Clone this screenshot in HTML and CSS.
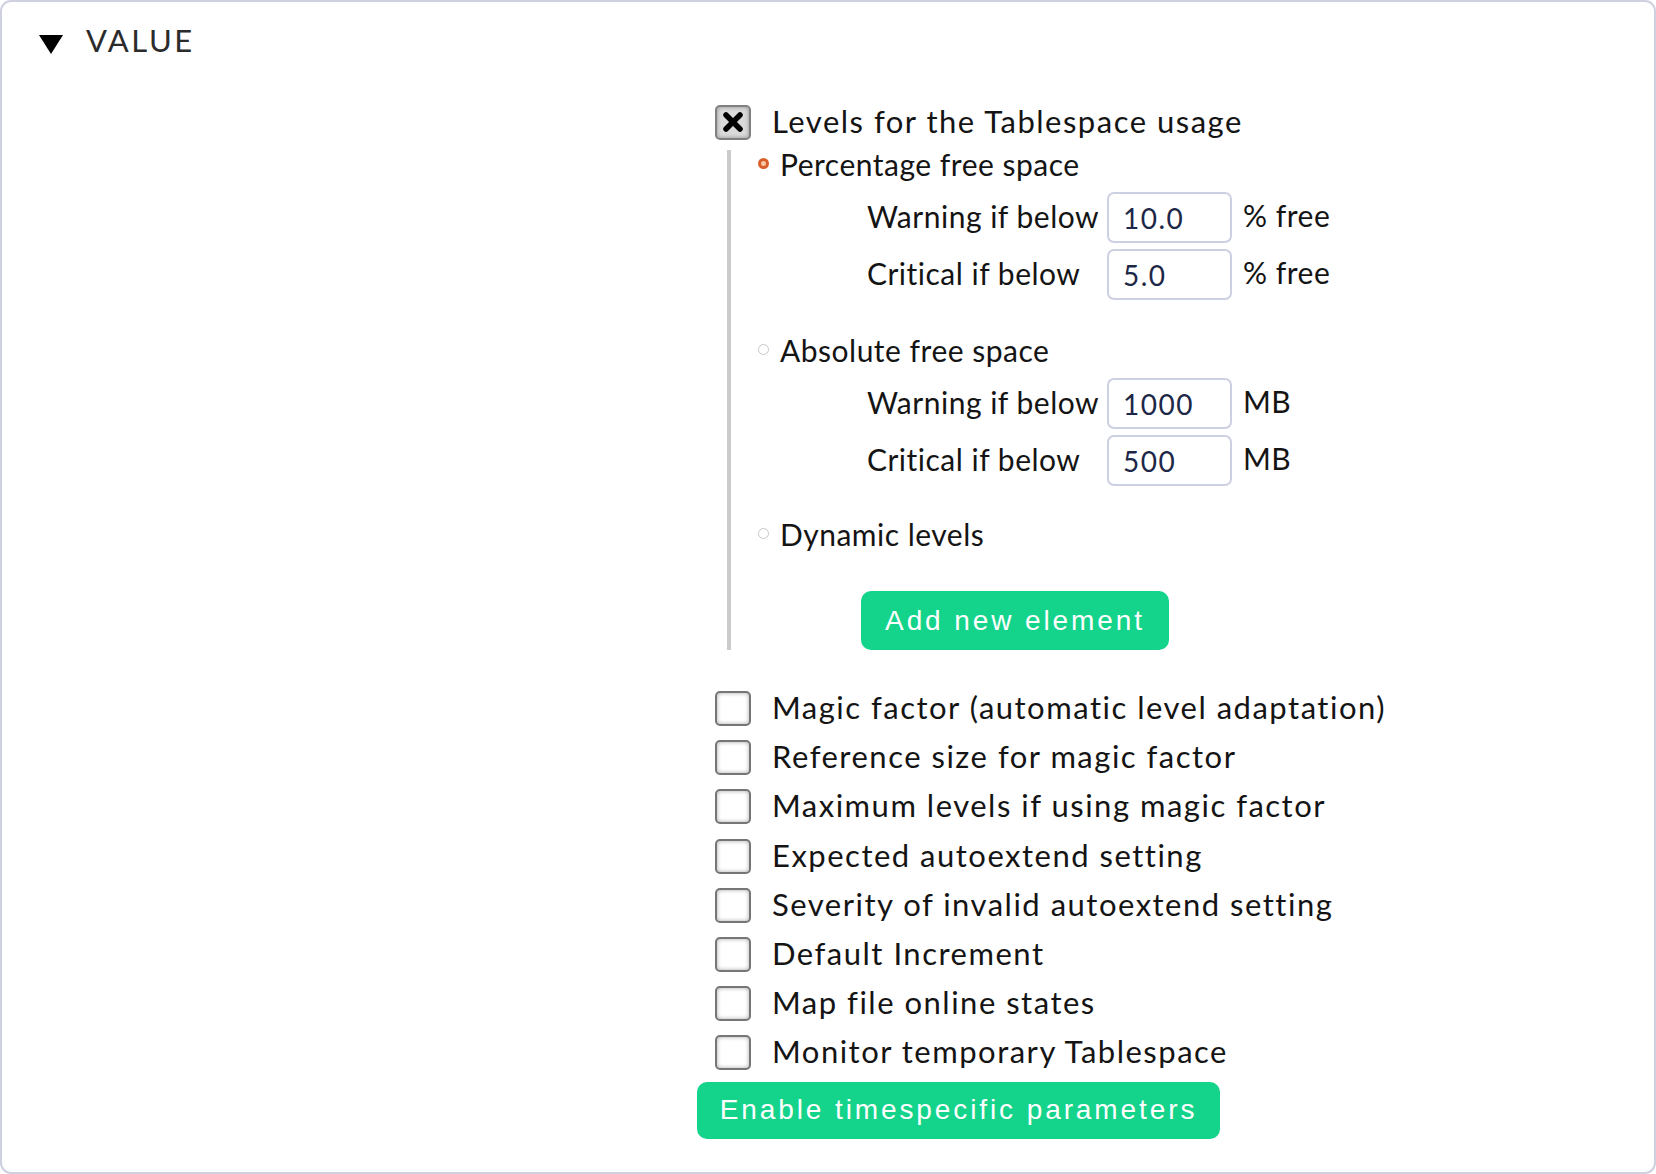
FILE: index.html
```html
<!DOCTYPE html>
<html>
<head>
<meta charset="utf-8">
<link rel="stylesheet" href="styles.css">
</head>
<body>
<div class="panel">
  <div class="head">
    <span class="tri"></span>
    <span class="title">VALUE</span>
  </div>
  <div class="form">
    <div class="cbrow main">
      <span class="cb checked"><svg width="22" height="20" viewBox="0 0 22 20"><path d="M4 3 L18 17 M18 3 L4 17" stroke="#000" stroke-width="5.5" stroke-linecap="round" fill="none"/></svg></span>
      <span class="lbl">Levels for the Tablespace usage</span>
    </div>
    <div class="nest">
      <div class="rrow"><span class="radio on"></span><span class="lbl">Percentage free space</span></div>
      <div class="fields">
        <span class="flabel">Warning if below</span><input class="inp" type="text" value="10.0"><span class="unit">% free</span>
        <span class="flabel">Critical if below</span><input class="inp" type="text" value="5.0"><span class="unit">% free</span>
      </div>
      <div class="rrow"><span class="radio"></span><span class="lbl">Absolute free space</span></div>
      <div class="fields">
        <span class="flabel">Warning if below</span><input class="inp" type="text" value="1000"><span class="unit">MB</span>
        <span class="flabel">Critical if below</span><input class="inp" type="text" value="500"><span class="unit">MB</span>
      </div>
      <div class="rrow"><span class="radio"></span><span class="lbl">Dynamic levels</span></div>
      <div class="btnwrap"><button class="btn add">Add new element</button></div>
    </div>
    <div class="cblist">
      <div class="cbrow"><span class="cb"></span><span class="lbl">Magic factor (automatic level adaptation)</span></div>
      <div class="cbrow"><span class="cb"></span><span class="lbl">Reference size for magic factor</span></div>
      <div class="cbrow"><span class="cb"></span><span class="lbl">Maximum levels if using magic factor</span></div>
      <div class="cbrow"><span class="cb"></span><span class="lbl">Expected autoextend setting</span></div>
      <div class="cbrow"><span class="cb"></span><span class="lbl">Severity of invalid autoextend setting</span></div>
      <div class="cbrow"><span class="cb"></span><span class="lbl">Default Increment</span></div>
      <div class="cbrow"><span class="cb"></span><span class="lbl">Map file online states</span></div>
      <div class="cbrow"><span class="cb"></span><span class="lbl">Monitor temporary Tablespace</span></div>
    </div>
    <div class="enwrap"><button class="btn enable">Enable timespecific parameters</button></div>
  </div>
</div>
</body>
</html>
```
FILE: styles.css
```css
html, body {
  margin: 0;
  padding: 0;
  background: #ffffff;
}
body {
  font-family: Lato, "Open Sans", sans-serif;
  color: #141414;
}
.panel {
  box-sizing: border-box;
  width: 1656px;
  height: 1174px;
  border: 2px solid #cfd0e0;
  border-radius: 11px;
  background: #fff;
}
.head {
  display: flex;
  align-items: center;
  height: 76px;
  padding-left: 37px;
}
.tri {
  width: 0;
  height: 0;
  border-left: 12px solid transparent;
  border-right: 12px solid transparent;
  border-top: 19px solid #000;
  margin-top: 8px;
}
.title {
  margin-left: 23px;
  font-size: 31px;
  letter-spacing: 2.5px;
  color: #2b2b2b;
}
.form {
  padding-left: 713px;
  padding-top: 26px;
  font-size: 31px;
  letter-spacing: 1.5px;
}
.lbl {
  white-space: nowrap;
}
.cbrow {
  display: flex;
  align-items: center;
  height: 49.2px;
}
.cbrow .lbl {
  margin-top: -3px;
}
.cbrow.main {
  height: 36px;
}
.cb {
  box-sizing: border-box;
  width: 36px;
  height: 35px;
  flex: none;
  border: 2px solid #767676;
  border-radius: 5px;
  background: #fff;
  box-shadow: inset 0 0 4px rgba(0,0,0,0.35);
  margin-right: 21px;
  display: flex;
  align-items: center;
  justify-content: center;
}
.cb.checked {
  background: #dadada;
  border-color: #808080;
}
.nest {
  margin-left: 12px;
  margin-top: 10px;
  border-left: 4px solid #cbcbcb;
  padding-left: 27px;
  width: 700px;
  font-size: 30px;
  letter-spacing: 0.5px;
}
.rrow {
  display: flex;
  align-items: center;
  height: 30px;
}
.rrow .lbl {
  margin-top: -2px;
}
.radio {
  box-sizing: border-box;
  width: 11px;
  height: 11px;
  border-radius: 50%;
  border: 1.5px solid #c8c8c8;
  background: #fff;
  margin-right: 11px;
  margin-top: -4px;
  flex: none;
}
.radio.on {
  border: 3px solid #d9602a;
  background: #f5c8a8;
}
.fields {
  display: grid;
  grid-template-columns: 240px 125px auto;
  grid-auto-rows: 51px;
  row-gap: 6px;
  align-items: center;
  margin-left: 109px;
  margin-top: 12px;
  margin-bottom: 36px;
}
.fields + .rrow + .fields {
  margin-bottom: 34px;
}
.flabel {
  white-space: nowrap;
  margin-top: -3px;
}
.inp {
  box-sizing: border-box;
  width: 125px;
  height: 51px;
  border: 2px solid #cdd0e2;
  border-radius: 7px;
  padding: 0 0 0 14px;
  font-family: Lato, sans-serif;
  font-size: 28px;
  letter-spacing: 1.5px;
  color: #1d2747;
  background: #fff;
  outline: none;
}
.unit {
  margin-left: 11px;
  margin-top: -6px;
  white-space: nowrap;
}
.btnwrap {
  padding-top: 41px;
  padding-left: 103px;
}
.btn {
  border: none;
  background: #14d38b;
  color: #fff;
  font-family: "Liberation Sans", Arial, sans-serif;
  font-size: 28px;
  letter-spacing: 2.9px;
  border-radius: 10px;
  padding: 0;
  display: flex;
  align-items: center;
  justify-content: center;
}
.btn.add {
  width: 308px;
  height: 59px;
}
.cblist {
  margin-top: 34px;
}
.enwrap {
  margin-left: -18px;
  margin-top: 4px;
}
.btn.enable {
  width: 523px;
  height: 57px;
}
```
